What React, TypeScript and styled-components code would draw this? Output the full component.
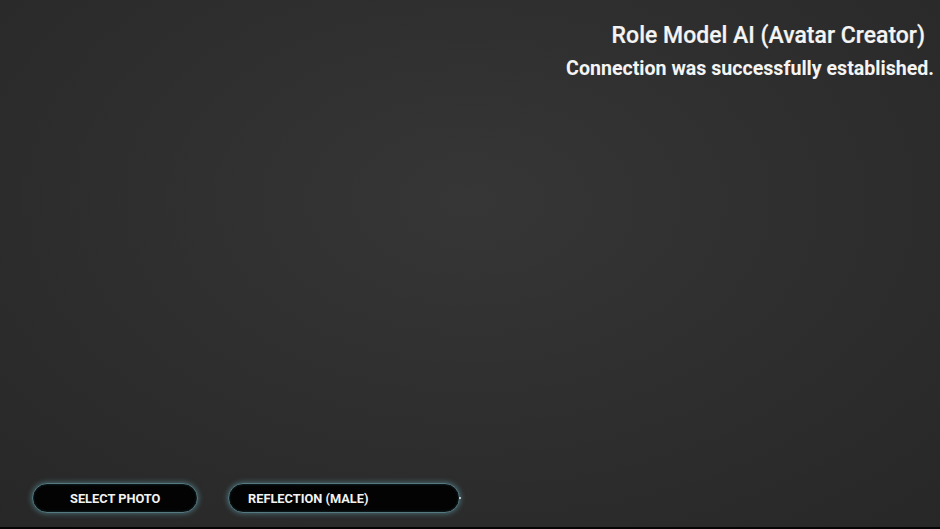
import React from "react";
import styled, { createGlobalStyle } from "styled-components";

const GlobalStyle = createGlobalStyle`
  html, body {
    margin: 0;
    padding: 0;
    background: #222;
  }
  body {
    font-family: Roboto, "Liberation Sans", Arial, sans-serif;
  }
`;

const Screen = styled.div`
  width: 940px;
  height: 529px;
  overflow: hidden;
  display: flex;
  flex-direction: column;
  background: radial-gradient(
    ellipse 75% 85% at 50% 38%,
    #363636 0%,
    #2f2f2f 45%,
    #272727 100%
  );
`;

const Header = styled.header`
  display: flex;
  flex-direction: column;
  align-items: flex-end;
  padding: 21px 6px 0 0;
  gap: 7px;
`;

const Title = styled.h1`
  margin: 0 9px 0 0;
  font-size: 23px;
  font-weight: 500;
  line-height: 29px;
  color: #f4f4f4;
  -webkit-text-stroke: 0.2px #f4f4f4;
`;

const Status = styled.div`
  font-size: 19.6px;
  font-weight: 700;
  line-height: 24px;
  color: #f4f4f4;
`;

const Spacer = styled.div`
  flex: 1;
`;

const ButtonBar = styled.div`
  display: flex;
  align-items: center;
  gap: 30px;
  padding: 0 0 14px 32px;
`;

const PillButton = styled.button<{ $width: number; $indent: number }>`
  position: relative;
  width: ${({ $width }) => $width}px;
  height: 30px;
  padding: 0 0 0 ${({ $indent }) => $indent}px;
  display: flex;
  align-items: center;
  border: 1.5px solid #557a82;
  border-radius: 15px;
  background: #030303;
  box-shadow: 0 0 5px 1px rgba(95, 150, 160, 0.55),
    inset 0 0 3px rgba(95, 150, 160, 0.35);
  color: #f2f2f2;
  font-family: Roboto, "Liberation Sans", Arial, sans-serif;
  font-size: 12.8px;
  font-weight: 700;
  cursor: pointer;
`;

const EdgeDot = styled.span`
  position: absolute;
  right: -2px;
  top: 13px;
  width: 2px;
  height: 2px;
  border-radius: 1px;
  background: #dfeff2;
`;

const BottomStrip = styled.div`
  height: 2px;
  background: #050505;
`;

export default function App() {
  return (
    <>
      <GlobalStyle />
      <Screen>
        <Header>
          <Title>Role Model AI (Avatar Creator)</Title>
          <Status>Connection was successfully established.</Status>
        </Header>
        <Spacer />
        <ButtonBar>
          <PillButton $width={166} $indent={37}>
            SELECT PHOTO
          </PillButton>
          <PillButton $width={232} $indent={19}>
            REFLECTION (MALE)
            <EdgeDot />
          </PillButton>
        </ButtonBar>
        <BottomStrip />
      </Screen>
    </>
  );
}
